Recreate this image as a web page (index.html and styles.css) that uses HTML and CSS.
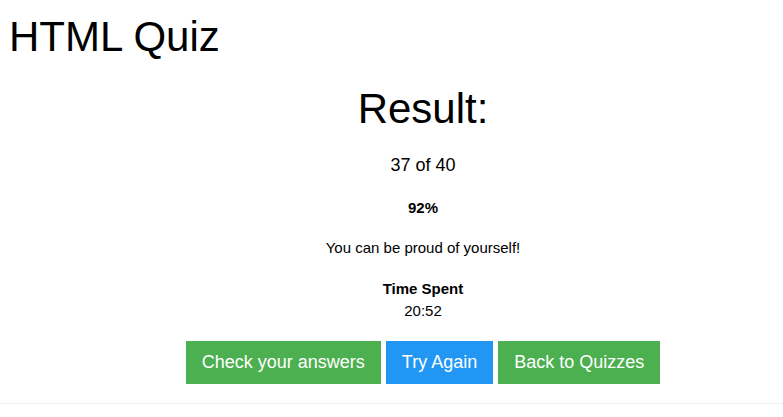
FILE: index.html
```html
<!DOCTYPE html>
<html lang="en">
<head>
<meta charset="utf-8">
<title>HTML Quiz</title>
<link rel="stylesheet" href="styles.css">
</head>
<body>
<h1 class="page-title">HTML Quiz</h1>
<main class="result">
  <h2 class="result-title">Result:</h2>
  <p class="score">37 of 40</p>
  <p class="percent">92%</p>
  <p class="message">You can be proud of yourself!</p>
  <div class="time">
    <div class="time-label">Time Spent</div>
    <div class="time-value">20:52</div>
  </div>
  <div class="actions">
    <a class="btn btn-green" href="#">Check your answers</a>
    <a class="btn btn-blue" href="#">Try Again</a>
    <a class="btn btn-green" href="#">Back to Quizzes</a>
  </div>
</main>
<hr class="divider">
</body>
</html>
```
FILE: styles.css
```css
html, body {
  margin: 0;
  padding: 0;
  background: #fff;
  color: #000;
  font-family: "Liberation Sans", Arial, sans-serif;
}
.page-title {
  margin: 12px 0 0;
  padding-left: 9px;
  font-size: 42px;
  line-height: 1.2;
  font-weight: normal;
}
.result {
  padding-left: 63px;
  display: flex;
  flex-direction: column;
  align-items: center;
  text-align: center;
  gap: 18px;
}
.result-title {
  margin: 22px 0 0;
  font-size: 42px;
  line-height: 1.2;
  font-weight: normal;
}
.result p { margin: 0; }
.result .score {
  margin-top: -1px;
  font-size: 18px;
  line-height: 27px;
}
.percent {
  font-size: 15px;
  line-height: 22.5px;
  font-weight: bold;
}
.message {
  font-size: 15px;
  line-height: 22.5px;
}
.time {
  font-size: 15px;
  line-height: 22.5px;
}
.time-label { font-weight: bold; }
.actions {
  display: flex;
  gap: 5px;
}
.btn {
  display: block;
  padding: 8px 16px;
  font-size: 18px;
  line-height: 27px;
  color: #fff;
  text-decoration: none;
}
.btn-green { background: #4CAF50; }
.btn-blue { background: #2196F3; }
.divider {
  margin: 19px 0 0;
  border: 0;
  border-top: 1px solid #eee;
  height: 0;
}
```
